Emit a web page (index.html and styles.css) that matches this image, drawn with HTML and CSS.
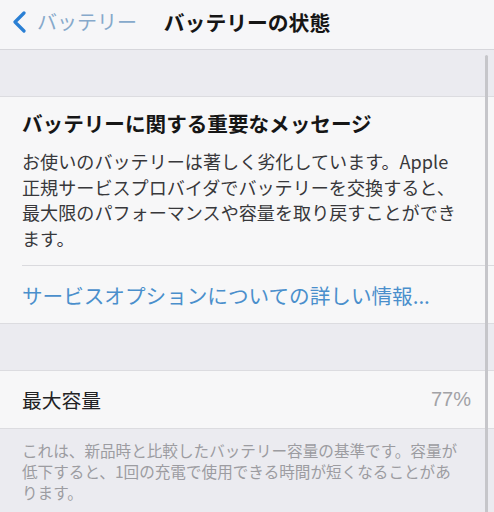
FILE: index.html
```html
<!DOCTYPE html>
<html lang="ja">
<head>
<meta charset="utf-8">
<link rel="stylesheet" href="styles.css">
</head>
<body>
<div class="screen">
  <header class="nav">
    <div class="back">
      <svg class="chev" width="16" height="22" viewBox="0 0 16 22"><path d="M13 2 L4 11 L13 20" fill="none" stroke="#2a7fd4" stroke-width="3.2" stroke-linecap="round" stroke-linejoin="round"/></svg>
      <span class="back-label">バッテリー</span>
    </div>
    <div class="title">バッテリーの状態</div>
    <div></div>
  </header>
  <div class="band"></div>
  <section class="card">
    <div class="msg">
      <h2 class="msg-title">バッテリーに関する重要なメッセージ</h2>
      <p class="msg-body">お使いのバッテリーは著しく劣化しています。Apple<br>正規サービスプロバイダでバッテリーを交換すると、<br>最大限のパフォーマンスや容量を取り戻すことができ<br>ます。</p>
    </div>
    <div class="link-row">サービスオプションについての詳しい情報...</div>
  </section>
  <div class="band"></div>
  <section class="card">
    <div class="cap-row">
      <span class="cap-label">最大容量</span>
      <span class="cap-value">77%</span>
    </div>
  </section>
  <p class="footnote">これは、新品時と比較したバッテリー容量の基準です。容量が低下すると、1回の充電で使用できる時間が短くなることがあります。</p>
  <div class="scroll"></div>
</div>
</body>
</html>
```

FILE: styles.css
```css
html, body {
  margin: 0;
  padding: 0;
}
body {
  background: #ebebf0;
  font-family: "Noto Sans CJK JP", "Noto Sans", sans-serif;
  width: 494px;
  height: 512px;
  overflow: hidden;
}
.screen {
  position: relative;
  width: 494px;
  height: 512px;
  overflow: hidden;
}
.nav {
  box-sizing: border-box;
  height: 50px;
  padding-bottom: 5px;
  background: #f6f6f8;
  border-bottom: 1px solid #d6d6db;
  display: grid;
  grid-template-columns: 1fr auto 1fr;
  align-items: center;
}
.back {
  display: flex;
  align-items: center;
  padding-left: 11px;
  gap: 10px;
}
.chev {
  display: block;
}
.back-label {
  font-size: 20px;
  line-height: 24px;
  color: #86a9cb;
}
.title {
  font-size: 20.8px;
  line-height: 24px;
  font-weight: 700;
  color: #151515;
}
.band {
  height: 46px;
}
.card {
  background: #f7f7f8;
  border-top: 1px solid #dcdce0;
  border-bottom: 1px solid #dcdce0;
}
.msg {
  margin-left: 22px;
  padding: 12px 16px 14px 0;
  border-bottom: 1px solid #dadade;
}
.msg-title {
  margin: 0;
  font-size: 20.6px;
  line-height: 28px;
  font-weight: 700;
  color: #161616;
}
.msg-body {
  margin: 12px 0 0;
  font-size: 18.1px;
  line-height: 25.5px;
  color: #38383b;
  white-space: nowrap;
}
.link-row {
  height: 57px;
  display: flex;
  align-items: center;
  padding-left: 22px;
  font-size: 20.6px;
  color: #4a8fcc;
}
.cap-row {
  height: 57px;
  display: flex;
  align-items: center;
  justify-content: space-between;
  padding: 0 23px 0 22px;
}
.cap-label {
  font-size: 19.8px;
  color: #222224;
}
.cap-value {
  font-family: "Liberation Sans", "Noto Sans", sans-serif;
  font-size: 20px;
  color: #a2a2a6;
}
.footnote {
  margin: 0;
  padding: 11px 28px 0 22px;
  font-size: 15.6px;
  line-height: 21px;
  color: #9c9ca1;
}
.scroll {
  position: absolute;
  right: 6px;
  top: 55px;
  width: 3px;
  height: 470px;
  background: #c6c6ca;
  border-radius: 2px;
}
```
